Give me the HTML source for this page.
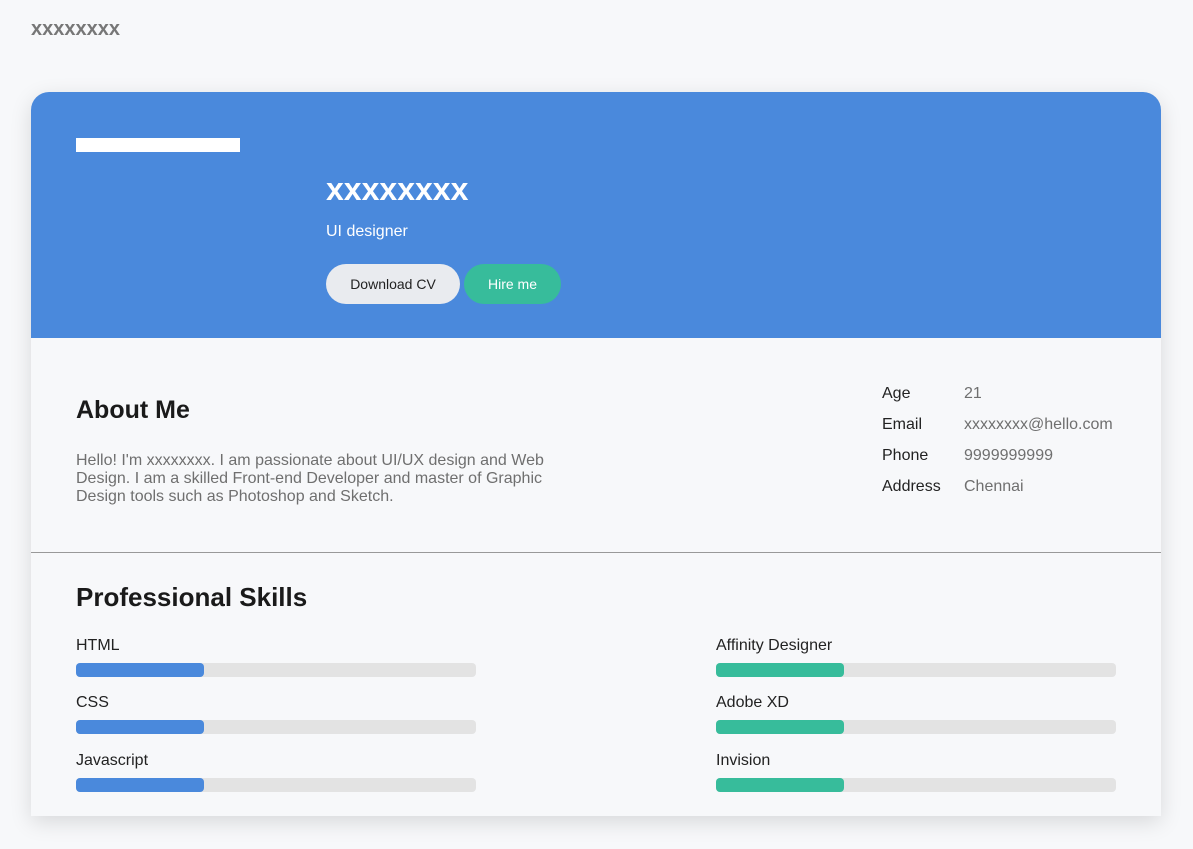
<!DOCTYPE html>
<html><head><style>
*{margin:0;padding:0;box-sizing:border-box}
body{width:1193px;height:849px;background:#f7f8fa;font-family:"Liberation Sans",Arial,sans-serif;position:relative;overflow:hidden}
.a{position:absolute;white-space:nowrap}
.card{position:absolute;left:31px;top:92px;width:1130px;height:724px;background:#f7f8fa;border-radius:18px 18px 0 0;box-shadow:0 6px 22px rgba(0,0,0,0.13);overflow:hidden}
.hdr{position:absolute;left:0;top:0;width:1130px;height:246px;background:#4a89dc}
.bar{position:absolute;height:14px;width:400px;background:#e3e3e3;border-radius:4px}
.bar i{display:block;height:14px;width:128px;border-radius:4px}
.lbl{font-size:16px;color:#222}
</style></head><body>
<div class="a" style="left:31px;top:18px;font-size:20px;font-weight:bold;color:#777">xxxxxxxx</div>
<div class="card">
<div class="hdr">
<div class="a" style="left:45px;top:46px;width:164px;height:14px;background:#fff"></div>
<div class="a" style="left:295px;top:79px;font-size:32px;font-weight:bold;color:#fff">xxxxxxxx</div>
<div class="a" style="left:295px;top:131px;font-size:16px;color:#fff">UI designer</div>
<div class="a" style="left:295px;top:172px;width:134px;height:40px;border-radius:20px;background:#e9ebef;color:#222;font-size:14px;text-align:center;line-height:40px">Download CV</div>
<div class="a" style="left:433px;top:172px;width:97px;height:40px;border-radius:20px;background:#37bc9b;color:#fff;font-size:14px;text-align:center;line-height:40px">Hire me</div>
</div>
<div class="a" style="left:45px;top:304px;font-size:25px;font-weight:bold;color:#1a1a1a">About Me</div>
<div class="a" style="left:45px;top:360px;font-size:16px;line-height:18px;color:#6f6f6f;white-space:normal;width:480px">Hello! I'm xxxxxxxx. I am passionate about UI/UX design and Web Design. I am a skilled Front-end Developer and master of Graphic Design tools such as Photoshop and Sketch.</div>
<div class="a lbl" style="left:851px;top:293px">Age</div><div class="a" style="left:933px;top:293px;font-size:16px;color:#6f6f6f">21</div>
<div class="a lbl" style="left:851px;top:324px">Email</div><div class="a" style="left:933px;top:324px;font-size:16px;color:#6f6f6f">xxxxxxxx@hello.com</div>
<div class="a lbl" style="left:851px;top:355px">Phone</div><div class="a" style="left:933px;top:355px;font-size:16px;color:#6f6f6f">9999999999</div>
<div class="a lbl" style="left:851px;top:386px">Address</div><div class="a" style="left:933px;top:386px;font-size:16px;color:#6f6f6f">Chennai</div>
<div class="a" style="left:0;top:460px;width:1130px;height:1px;background:#999"></div>
<div class="a" style="left:45px;top:490px;font-size:26px;font-weight:bold;color:#1a1a1a">Professional Skills</div>
<div class="a lbl" style="left:45px;top:545px">HTML</div><div class="bar" style="left:45px;top:571px"><i style="background:#4a89dc"></i></div>
<div class="a lbl" style="left:45px;top:602px">CSS</div><div class="bar" style="left:45px;top:628px"><i style="background:#4a89dc"></i></div>
<div class="a lbl" style="left:45px;top:660px">Javascript</div><div class="bar" style="left:45px;top:686px"><i style="background:#4a89dc"></i></div>
<div class="a lbl" style="left:685px;top:545px">Affinity Designer</div><div class="bar" style="left:685px;top:571px"><i style="background:#37bc9b"></i></div>
<div class="a lbl" style="left:685px;top:602px">Adobe XD</div><div class="bar" style="left:685px;top:628px"><i style="background:#37bc9b"></i></div>
<div class="a lbl" style="left:685px;top:660px">Invision</div><div class="bar" style="left:685px;top:686px"><i style="background:#37bc9b"></i></div>
</div>
</body></html>
